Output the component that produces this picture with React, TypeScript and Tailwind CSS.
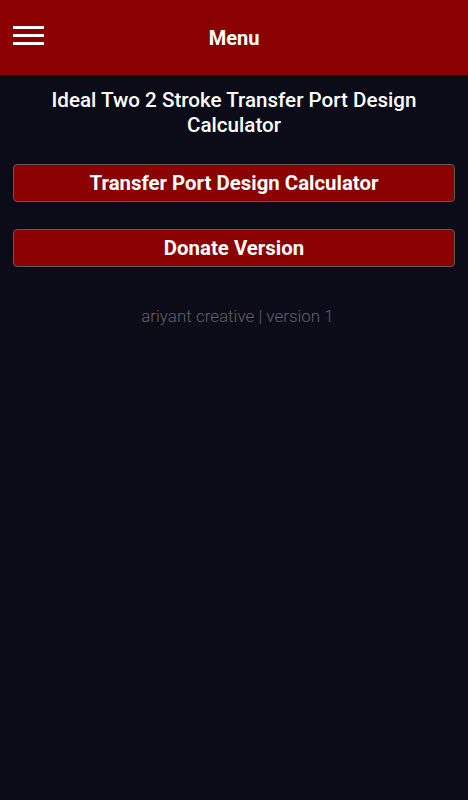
export default function App() {
  return (
    <div className="min-h-[800px] w-full bg-[#0c0c18] font-['Roboto',sans-serif]">
      {/* Top bar */}
      <header className="relative flex h-[75px] items-center justify-center bg-[#8b0000]">
        <button className="absolute left-[13px] top-[26px] flex w-[31px] flex-col gap-[5px]">
          <span className="block h-[3px] w-full bg-white" />
          <span className="block h-[3px] w-full bg-white" />
          <span className="block h-[3px] w-full bg-white" />
        </button>
        <h1 className="text-[20px] font-bold text-white">Menu</h1>
      </header>

      <main className="px-[13px]">
        <h2 className="mx-auto mt-[13px] max-w-[400px] text-center text-[20.6px] font-medium leading-[25px] text-white">
          Ideal Two 2 Stroke Transfer Port Design Calculator
        </h2>

        <div className="mt-[26px] flex flex-col gap-[27px]">
          <button className="h-[38px] w-full rounded-[4px] border border-[#5a5a5a] bg-[#8b0000] text-[20.4px] font-bold text-white">
            Transfer Port Design Calculator
          </button>
          <button className="h-[38px] w-full rounded-[4px] border border-[#5a5a5a] bg-[#8b0000] text-[20.4px] font-bold text-white">
            Donate Version
          </button>
        </div>

        <p className="mt-[37px] pl-[7px] text-center text-[17px] font-light text-[#60606a]">
          ariyant creative | version 1
        </p>
      </main>
    </div>
  );
}
